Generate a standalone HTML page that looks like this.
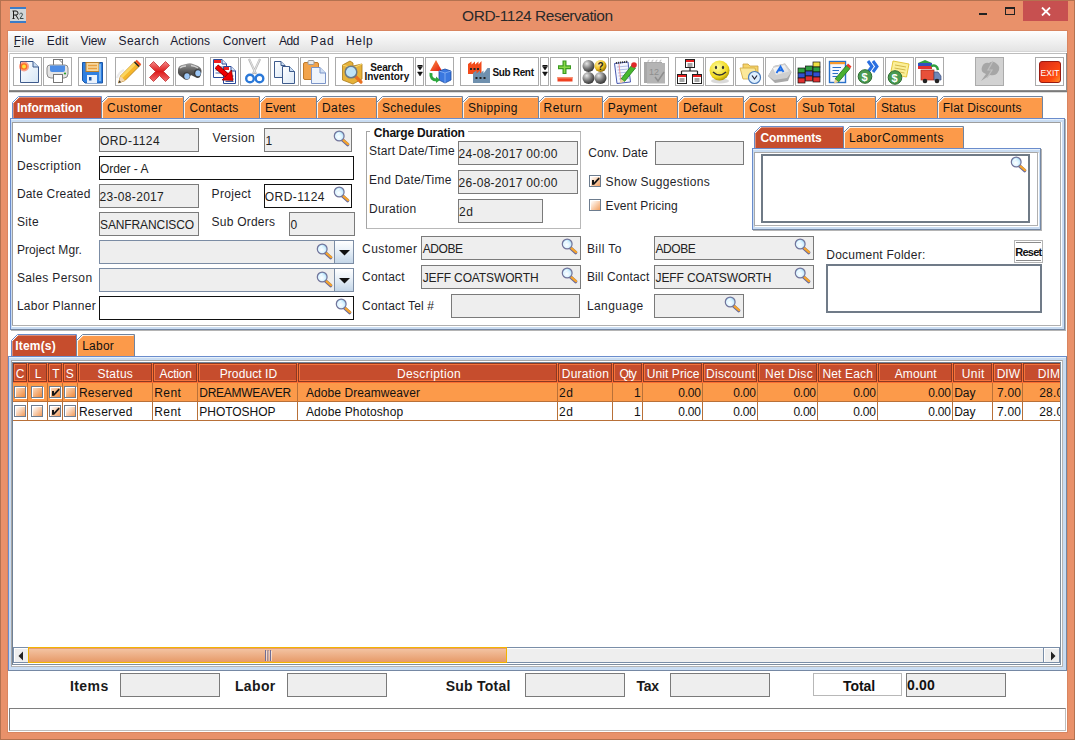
<!DOCTYPE html><html><head><meta charset="utf-8"><title>ORD-1124 Reservation</title><style>
html,body{margin:0;padding:0}
body{width:1075px;height:740px;position:relative;overflow:hidden;background:#E9916A;font-family:"Liberation Sans",sans-serif}
body div, body svg{position:absolute;box-sizing:border-box}
.t{white-space:nowrap;line-height:20px;height:20px}
</style></head><body>
<div style="left:0px;top:0px;width:1075px;height:1px;background:#B47250"></div>
<div style="left:0px;top:0px;width:1px;height:740px;background:#B47250"></div>
<div style="left:1074px;top:0px;width:1px;height:740px;background:#B47250"></div>
<div style="left:0px;top:739px;width:1075px;height:1px;background:#B47250"></div>
<div class="t" style="left:462.10px;top:6px;font-size:15.5px;font-weight:normal;color:#2a2a2a;letter-spacing:-0.474px">ORD-1124 Reservation</div>
<div style="left:10px;top:7px;width:16px;height:16px;background:#d2d6d8"><div style="left:0;top:0;width:16px;height:2px;background:#3a7cc8"></div><div style="left:0;top:14px;width:16px;height:2px;background:#3a7cc8"></div><svg style="left:1px;top:3px" width="14" height="11" viewBox="0 0 14 11"><path d="M2.5 1 V8.5 M1.5 8.5 H3.5 M1.5 1 H5 Q7 1 7 3.2 Q7 5 5 5 H2.5 M4.8 5 L7.5 9.5" stroke="#1a1a1a" stroke-width="1" fill="none"/><path d="M8.5 4.2 Q9.5 2.8 10.8 3.2 Q12 3.8 11 5.5 L9 8.5 H12.5" stroke="#3a4a4a" stroke-width="1" fill="none"/></svg></div>
<div style="left:979px;top:13px;width:8px;height:2px;background:#222"></div>
<div style="left:1005px;top:7px;width:10px;height:8px;border:1px solid #222;border-top-width:2px"></div>
<div style="left:1023px;top:1px;width:45px;height:20px;background:#C75050"></div>
<svg style="left:1041px;top:7px" width="10" height="9" viewBox="0 0 10 9"><path d="M1 0.5 L9 8.5 M9 0.5 L1 8.5" stroke="#fff" stroke-width="1.8"/></svg>
<div style="left:7px;top:30px;width:1061px;height:703px;background:#D98560"></div>
<div style="left:8px;top:31px;width:1059px;height:701px;background:#FFFFFF"></div>
<div style="left:8px;top:31px;width:1059px;height:20px;background:linear-gradient(#ffffff,#f6f6f6 30%,#e4e4e4)"></div>
<div style="left:8px;top:51px;width:1059px;height:1px;background:#d6d6d6"></div>
<div class="t" style="left:13.70px;top:31px;font-size:12px;font-weight:normal;color:#1a1a30;letter-spacing:0.367px">File</div>
<div class="t" style="left:46.70px;top:31px;font-size:12px;font-weight:normal;color:#1a1a30;letter-spacing:0.3px">Edit</div>
<div class="t" style="left:80.60px;top:31px;font-size:12px;font-weight:normal;color:#1a1a30;letter-spacing:-0.133px">View</div>
<div class="t" style="left:118.50px;top:31px;font-size:12px;font-weight:normal;color:#1a1a30;letter-spacing:0.46px">Search</div>
<div class="t" style="left:170.20px;top:31px;font-size:12px;font-weight:normal;color:#1a1a30;letter-spacing:0.067px">Actions</div>
<div class="t" style="left:222.70px;top:31px;font-size:12px;font-weight:normal;color:#1a1a30;letter-spacing:0.15px">Convert</div>
<div class="t" style="left:278.90px;top:31px;font-size:12px;font-weight:normal;color:#1a1a30;letter-spacing:-0.35px">Add</div>
<div class="t" style="left:310.60px;top:31px;font-size:12px;font-weight:normal;color:#1a1a30;letter-spacing:0.85px">Pad</div>
<div class="t" style="left:345.90px;top:31px;font-size:12px;font-weight:normal;color:#1a1a30;letter-spacing:0.7px">Help</div>
<div style="left:14px;top:46px;width:6px;height:1px;background:#222"></div>
<div style="left:9px;top:53px;width:1058px;height:1px;background:#bdbdbd"></div>
<div style="left:9px;top:53px;width:1px;height:37px;background:#d0d0d0"></div>
<div style="left:1066px;top:53px;width:1px;height:38px;background:#8e8e8e"></div>
<div style="left:9px;top:90px;width:1058px;height:1px;background:#8c8c8c"></div>
<div style="left:9px;top:91px;width:1058px;height:1px;background:#7a7a7a"></div>
<div style="left:9px;top:92px;width:1058px;height:1px;background:#dcdcdc"></div>
<div style="left:13px;top:57px;width:29px;height:29px;background:#ffffff;border:1px solid #ababab"></div>
<svg style="left:14px;top:58px" width="27" height="27" viewBox="0 0 27 27"><defs><linearGradient id="pg1" x1="0" y1="0" x2="1" y2="1"><stop offset="0" stop-color="#ffffff"/><stop offset="1" stop-color="#d6e6f6"/></linearGradient></defs><path d="M6.5 3.5 H19 L24.5 9 V24.5 H6.5 Z" fill="url(#pg1)" stroke="#3d5a8c"/><path d="M19 3.5 V9 H24.5" fill="#c8dcf2" stroke="#3d5a8c"/><circle cx="10" cy="8.5" r="5" fill="#ff5a30" opacity="0.55"/><circle cx="10" cy="8.5" r="3.3" fill="#ff7020"/><circle cx="10" cy="8.5" r="2" fill="#ffe040"/></svg>
<div style="left:43px;top:57px;width:29px;height:29px;background:#ffffff;border:1px solid #ababab"></div>
<svg style="left:44px;top:58px" width="27" height="27" viewBox="0 0 27 27"><rect x="9.5" y="1.5" width="9" height="9" fill="#fff" stroke="#777"/><path d="M15 1.5 L18.5 5" stroke="#777"/><path d="M3 10 Q3 7 6 7 H21 Q24 7 24 10 V16 Q24 20 20 20 H7 Q3 20 3 16 Z" fill="#e4e4e4" stroke="#8a8a8a"/><path d="M6 7.5 H21 V12 Q21 14 19 14 H8 Q6 14 6 12 Z" fill="#4d8de6"/><rect x="9.5" y="16.5" width="9" height="8" fill="#fff" stroke="#777"/><circle cx="21" cy="15.5" r="1.1" fill="#2ca02c"/></svg>
<div style="left:78px;top:57px;width:29px;height:29px;background:#ffffff;border:1px solid #ababab"></div>
<svg style="left:79px;top:58px" width="27" height="27" viewBox="0 0 27 27"><path d="M3.5 4.5 H23.5 V25 H6 L3.5 22.5 Z" fill="#2f7fe0" stroke="#1b57a8"/><rect x="7" y="4.5" width="13" height="9" fill="#f9d9a0" stroke="#b8802c"/><path d="M9 7.5 H18 M9 10.5 H18" stroke="#e8a040" stroke-width="1.4"/><rect x="8" y="17" width="10" height="8" fill="#eaf2fc"/><rect x="10" y="19" width="2.5" height="3.5" fill="#1b57a8"/><rect x="20" y="6" width="2" height="17" fill="#7fb8f0"/></svg>
<div style="left:115px;top:57px;width:29px;height:29px;background:#ffffff;border:1px solid #ababab"></div>
<svg style="left:116px;top:58px" width="27" height="27" viewBox="0 0 27 27"><path d="M2.5 25 L4.5 18 L19.5 3 L24 7.5 L9 22.5 Z" fill="#f5b62a" stroke="#b27712" stroke-width="0.8"/><path d="M4.5 18 L19.5 3 L21.5 5 L6.5 20 Z" fill="#fbd560"/><path d="M2.5 25 L4.5 18 L9 22.5 Z" fill="#f1d6b0"/><path d="M2.5 25 L3.3 22.3 L5.2 24.2 Z" fill="#333"/><path d="M18.5 4 L23 8.5" stroke="#222" stroke-width="1.6"/><path d="M20 2.5 L24.5 7" stroke="#f04a20" stroke-width="2.2"/><path d="M1 20 Q3 14 8 12" stroke="#ddd" stroke-width="2" fill="none" opacity="0.6"/></svg>
<div style="left:145px;top:57px;width:29px;height:29px;background:#ffffff;border:1px solid #ababab"></div>
<svg style="left:146px;top:58px" width="27" height="27" viewBox="0 0 27 27"><defs><linearGradient id="xg" x1="0" y1="0" x2="0" y2="1"><stop offset="0" stop-color="#f58a8a"/><stop offset="0.5" stop-color="#dd1a1a"/><stop offset="1" stop-color="#f07070"/></linearGradient></defs><path d="M3.5 7.5 L7.5 3.5 L13.5 9.5 L19.5 3.5 L23.5 7.5 L17.5 13.5 L23.5 19.5 L19.5 23.5 L13.5 17.5 L7.5 23.5 L3.5 19.5 L9.5 13.5 Z" fill="url(#xg)" stroke="#c03030" stroke-width="0.8"/></svg>
<div style="left:175px;top:57px;width:29px;height:29px;background:#ffffff;border:1px solid #ababab"></div>
<svg style="left:176px;top:58px" width="27" height="27" viewBox="0 0 27 27"><defs><linearGradient id="bng" x1="0" y1="0" x2="0" y2="1"><stop offset="0" stop-color="#9a9a9a"/><stop offset="0.5" stop-color="#5a5a5a"/><stop offset="1" stop-color="#3a3a3a"/></linearGradient></defs><path d="M2 12 Q2 8 6 7 L12 5.5 Q15 5 17 6 L22 8 Q26 10 25.5 14 L24 19 Q22 21 19 19 L15 17 L13 20 Q10 22 7 20 L3 17 Q1.5 15 2 12 Z" fill="url(#bng)"/><path d="M4 10 Q6 8 10 8 M15 7.5 Q19 8 22 10" stroke="#d0d0d0" stroke-width="1.3" fill="none"/><ellipse cx="10.5" cy="18" rx="3.6" ry="3.8" fill="#3a3a3a"/><ellipse cx="21.5" cy="15" rx="3.6" ry="3.8" fill="#3a3a3a"/><ellipse cx="11" cy="18.3" rx="2.7" ry="3" fill="#9cc6f4"/><ellipse cx="22" cy="15.3" rx="2.7" ry="3" fill="#9cc6f4"/></svg>
<div style="left:210px;top:57px;width:29px;height:29px;background:#ffffff;border:1px solid #ababab"></div>
<svg style="left:211px;top:58px" width="27" height="27" viewBox="0 0 27 27"><path d="M2.5 1.5 H11 L15.5 6 V19.5 H2.5 Z" fill="#fff" stroke="#2a4a9a"/><rect x="3" y="2" width="7" height="3" fill="#f02020"/><path d="M11 1.5 V6 H15.5" fill="#dde8f6" stroke="#2a4a9a"/><path d="M4.5 9 H13 M4.5 12 H13 M4.5 15 H11" stroke="#2a4a9a" stroke-width="0.8"/><path d="M12.5 8.5 H20 L24.5 13 V25.5 H12.5 Z" fill="#fff" stroke="#2a4a9a"/><rect x="13" y="9" width="5" height="3" fill="#f02020"/><path d="M20 8.5 V13 H24.5" fill="#dde8f6" stroke="#2a4a9a"/><path d="M14.5 18 H22.5 M14.5 21 H22.5 M14.5 23.5 H22.5" stroke="#2a4a9a" stroke-width="0.9"/><path d="M5.5 8.5 L16.5 18" stroke="#7a0000" stroke-width="5.2"/><path d="M5.5 8.5 L16.5 18" stroke="#f00000" stroke-width="3.8"/><path d="M11 22 L22 22.5 L20.5 12 Z" fill="#f00000" stroke="#7a0000" stroke-width="0.7"/></svg>
<div style="left:240px;top:57px;width:29px;height:29px;background:#ffffff;border:1px solid #ababab"></div>
<svg style="left:241px;top:58px" width="27" height="27" viewBox="0 0 27 27"><path d="M8 1 L15 16 M19 1 L12 16" stroke="#b8b8b8" stroke-width="2.2"/><path d="M8.5 1.5 L14.5 15 M18.5 1.5 L12.5 15" stroke="#eee" stroke-width="0.8"/><circle cx="9" cy="20.5" r="3.8" fill="none" stroke="#2a78d8" stroke-width="2.4"/><circle cx="18.5" cy="20.5" r="3.8" fill="none" stroke="#2a78d8" stroke-width="2.4"/></svg>
<div style="left:270px;top:57px;width:29px;height:29px;background:#ffffff;border:1px solid #ababab"></div>
<svg style="left:271px;top:58px" width="27" height="27" viewBox="0 0 27 27"><defs><linearGradient id="cg" x1="0" y1="0" x2="1" y2="1"><stop offset="0" stop-color="#fff"/><stop offset="1" stop-color="#dbe8f6"/></linearGradient></defs><path d="M3.5 3.5 H10 L14 7.5 V19.5 H3.5 Z" fill="url(#cg)" stroke="#3d5a8c"/><path d="M10 3.5 V7.5 H14" fill="#c8dcf2" stroke="#3d5a8c"/><path d="M11.5 8.5 H18.5 L23.5 13.5 V25.5 H11.5 Z" fill="url(#cg)" stroke="#3d5a8c"/><path d="M18.5 8.5 V13.5 H23.5" fill="#c8dcf2" stroke="#3d5a8c"/></svg>
<div style="left:300px;top:57px;width:29px;height:29px;background:#ffffff;border:1px solid #ababab"></div>
<svg style="left:301px;top:58px" width="27" height="27" viewBox="0 0 27 27"><rect x="2.5" y="4.5" width="15" height="17" rx="1.5" fill="#f2a34a" stroke="#c07a28"/><rect x="7" y="2.5" width="6" height="4" rx="1" fill="#e8e8e8" stroke="#999"/><path d="M10.5 9.5 H19 L24.5 15 V25.5 H10.5 Z" fill="#eef4fc" stroke="#7a94c8"/><path d="M19 9.5 V15 H24.5" fill="#d0e0f4" stroke="#7a94c8"/></svg>
<div style="left:425px;top:57px;width:29px;height:29px;background:#ffffff;border:1px solid #ababab"></div>
<svg style="left:426px;top:58px" width="27" height="27" viewBox="0 0 27 27"><defs><linearGradient id="tg" x1="0" y1="0" x2="1" y2="1"><stop offset="0" stop-color="#ff9040"/><stop offset="1" stop-color="#e01810"/></linearGradient></defs><path d="M4 13 L10 2 L16 13 Z" fill="url(#tg)"/><path d="M13 13 L19 11 L25 13 V22 L19 25 L13 22 Z" fill="#3a78e0" stroke="#1a4aa0" stroke-width="0.8"/><path d="M13 13 L19 15 L25 13 M19 15 V25" stroke="#8ab4f4" stroke-width="0.8" fill="none"/><path d="M5 15 Q4 22 11 22" stroke="#2ca83c" stroke-width="3" fill="none"/><path d="M10 18.5 L14 22 L10 25 Z" fill="#2ca83c"/></svg>
<div style="left:550px;top:57px;width:29px;height:29px;background:#ffffff;border:1px solid #ababab"></div>
<svg style="left:551px;top:58px" width="27" height="27" viewBox="0 0 27 27"><path d="M13.5 2.5 V16 M7 9.2 H20" stroke="#3a9a20" stroke-width="4"/><path d="M13.5 3.5 V15 M8 9.2 H19" stroke="#8ad848" stroke-width="1.6"/><rect x="6.5" y="19" width="15" height="4.5" fill="#f04020"/><rect x="6.5" y="19" width="15" height="1.5" fill="#f89070"/></svg>
<div style="left:580px;top:57px;width:29px;height:29px;background:#ffffff;border:1px solid #ababab"></div>
<svg style="left:581px;top:58px" width="27" height="27" viewBox="0 0 27 27"><defs><radialGradient id="bg1" cx="0.35" cy="0.3" r="0.75"><stop offset="0" stop-color="#e8e8e8"/><stop offset="0.6" stop-color="#707070"/><stop offset="1" stop-color="#303030"/></radialGradient><radialGradient id="bg2" cx="0.35" cy="0.3" r="0.75"><stop offset="0" stop-color="#fff4b0"/><stop offset="0.6" stop-color="#f0c020"/><stop offset="1" stop-color="#806000"/></radialGradient></defs><circle cx="7.5" cy="8" r="6" fill="url(#bg1)"/><circle cx="19.5" cy="8" r="6" fill="url(#bg2)"/><circle cx="7.5" cy="20" r="6" fill="url(#bg1)"/><circle cx="19.5" cy="20" r="6" fill="url(#bg1)"/><text x="16.5" y="12" font-size="10" font-weight="bold" font-family="Liberation Sans" fill="#222">?</text></svg>
<div style="left:610px;top:57px;width:29px;height:29px;background:#ffffff;border:1px solid #ababab"></div>
<svg style="left:611px;top:58px" width="27" height="27" viewBox="0 0 27 27"><path d="M3.5 5.5 L17 4 L19.5 24 L6 25.5 Z" fill="#f4f6ff" stroke="#4a5ab0"/><path d="M5 5 L17 3.5" stroke="#333" stroke-width="2" stroke-dasharray="1 1"/><path d="M6 9 L17 8 M6.5 12 L17.5 11 M7 15 L18 14 M7.5 18 L18.5 17 M8 21 L19 20" stroke="#a0b0e0" stroke-width="0.8"/><path d="M8 6 L10 25" stroke="#f08080" stroke-width="0.8"/><path d="M10 21 L21 7 L24.5 10 L13.5 23.5 Z" fill="#48b830" stroke="#1e7a18" stroke-width="0.8"/><path d="M10 21 L9 25 L13.5 23.5 Z" fill="#f0d8a0"/><circle cx="23" cy="7" r="2.8" fill="#e02a2a"/></svg>
<div style="left:640px;top:57px;width:29px;height:29px;background:#ffffff;border:1px solid #ababab"></div>
<svg style="left:641px;top:58px" width="27" height="27" viewBox="0 0 27 27"><path d="M3 4 H21 V25 H3 Z" fill="#a8a8a8"/><path d="M6 5 H24 V25.5 H6 Z" fill="#b4b4b4"/><path d="M7 4 Q7 2 8.5 2 M11 4 Q11 2 12.5 2 M15 4 Q15 2 16.5 2 M19 4 Q19 2 20.5 2" stroke="#c8c8c8" stroke-width="1.2" fill="none"/><text x="8" y="17" font-size="9" font-family="Liberation Sans" fill="#8e8e8e">12</text><path d="M14 19 L17 23 L23 14" stroke="#8e8e8e" stroke-width="1.5" fill="none"/></svg>
<div style="left:675px;top:57px;width:29px;height:29px;background:#ffffff;border:1px solid #ababab"></div>
<svg style="left:676px;top:58px" width="27" height="27" viewBox="0 0 27 27"><path d="M14 9 V13 M5.5 13 H21.5 M5.5 13 V16 M21.5 13 V16" stroke="#222" stroke-width="1.2"/><rect x="9.5" y="1.5" width="9" height="8" fill="#fff" stroke="#222"/><rect x="10" y="2" width="8" height="2" fill="#e82020"/><path d="M11.5 6 H16.5 M11.5 8 H16.5" stroke="#222" stroke-width="0.8"/><rect x="1.5" y="16.5" width="9" height="9" fill="#fff" stroke="#222"/><rect x="2" y="17" width="8" height="2" fill="#e82020"/><path d="M3.5 21 H8.5 M3.5 23 H8.5" stroke="#222" stroke-width="0.8"/><rect x="16.5" y="16.5" width="9" height="9" fill="#fff" stroke="#222"/><rect x="17" y="17" width="8" height="2" fill="#e82020"/><path d="M18.5 21 H23.5 M18.5 23 H23.5" stroke="#222" stroke-width="0.8"/></svg>
<div style="left:705px;top:57px;width:29px;height:29px;background:#ffffff;border:1px solid #ababab"></div>
<svg style="left:706px;top:58px" width="27" height="27" viewBox="0 0 27 27"><defs><radialGradient id="sg" cx="0.4" cy="0.35" r="0.7"><stop offset="0" stop-color="#ffffa0"/><stop offset="0.7" stop-color="#f0d820"/><stop offset="1" stop-color="#a08800"/></radialGradient></defs><ellipse cx="14" cy="23" rx="9" ry="2.5" fill="#000" opacity="0.15"/><circle cx="13.5" cy="12.5" r="10" fill="url(#sg)"/><ellipse cx="10" cy="9.5" rx="1.1" ry="1.8" fill="#333"/><ellipse cx="17" cy="9.5" rx="1.1" ry="1.8" fill="#333"/><path d="M7 14 Q13.5 20 20 14" stroke="#333" stroke-width="1.5" fill="none"/></svg>
<div style="left:735px;top:57px;width:29px;height:29px;background:#ffffff;border:1px solid #ababab"></div>
<svg style="left:736px;top:58px" width="27" height="27" viewBox="0 0 27 27"><path d="M7 6 H12 L14 8 H22 V20 H7 Z" fill="#f6d46a" stroke="#c8a040" stroke-width="0.8"/><path d="M4 10 H19 L22 21 H7 Z" fill="#fbe89a" stroke="#d0a840" stroke-width="0.8"/><circle cx="18.5" cy="19.5" r="6" fill="#dff0ff" stroke="#4a7ab8" stroke-width="1.2"/><path d="M16 17.5 L18.5 21 L21 17.5" stroke="#223" stroke-width="1.2" fill="none"/></svg>
<div style="left:765px;top:57px;width:29px;height:29px;background:#ffffff;border:1px solid #ababab"></div>
<svg style="left:766px;top:58px" width="27" height="27" viewBox="0 0 27 27"><defs><linearGradient id="kg" x1="0" y1="0" x2="1" y2="1"><stop offset="0" stop-color="#ffffff"/><stop offset="1" stop-color="#d8d8d8"/></linearGradient></defs><path d="M2 18 L8 8 L19 5.5 L25.5 14 L22 23 L9 25 Z" fill="#a8a8a8"/><path d="M2 18 L8 8 L19 5.5 L25.5 14 L21 20 L8 22 Z" fill="#cfcfcf"/><path d="M7 10 L18.5 7 L23 13.5 L10 17 Z" fill="url(#kg)"/><path d="M10.5 15 L14.5 8.5 L17.5 14 M12 12.5 L16 12" stroke="#1f6ee8" stroke-width="1.8" fill="none"/></svg>
<div style="left:795px;top:57px;width:29px;height:29px;background:#ffffff;border:1px solid #ababab"></div>
<svg style="left:796px;top:58px" width="27" height="27" viewBox="0 0 27 27"><rect x="2" y="10" width="7" height="5" fill="#30a040" stroke="#111" stroke-width="0.7"/><rect x="2" y="15" width="7" height="5" fill="#3050d0" stroke="#111" stroke-width="0.7"/><rect x="2" y="20" width="7" height="5" fill="#e03030" stroke="#111" stroke-width="0.7"/><rect x="9.5" y="8" width="7" height="5" fill="#30a040" stroke="#111" stroke-width="0.7"/><rect x="9.5" y="13" width="7" height="5" fill="#3050d0" stroke="#111" stroke-width="0.7"/><rect x="9.5" y="18" width="7" height="5" fill="#e03030" stroke="#111" stroke-width="0.7"/><rect x="17" y="4" width="7" height="5" fill="#f0e040" stroke="#111" stroke-width="0.7"/><rect x="17" y="9" width="7" height="5" fill="#30a040" stroke="#111" stroke-width="0.7"/><rect x="17" y="14" width="7" height="5" fill="#3050d0" stroke="#111" stroke-width="0.7"/><rect x="17" y="19" width="7" height="5" fill="#e03030" stroke="#111" stroke-width="0.7"/></svg>
<div style="left:825px;top:57px;width:29px;height:29px;background:#ffffff;border:1px solid #ababab"></div>
<svg style="left:826px;top:58px" width="27" height="27" viewBox="0 0 27 27"><rect x="3.5" y="3.5" width="16" height="21" fill="#f4f8ff" stroke="#2a70c8" stroke-width="1.4"/><rect x="4" y="4" width="15" height="2.2" fill="#f59a30"/><path d="M6.5 9.5 H15 M6.5 12.5 H13 M6.5 15.5 H12 M6.5 18.5 H11" stroke="#2a70c8" stroke-width="1"/><path d="M9 21 L20.5 7.5 L24 10.5 L12.5 24 Z" fill="#48b030" stroke="#1e6a18" stroke-width="0.8"/><path d="M9 21 L8 25.5 L12.5 24 Z" fill="#f0d090"/><path d="M20.5 7.5 L22 5.5 L25.5 8.5 L24 10.5 Z" fill="#e83a2a"/></svg>
<div style="left:855px;top:57px;width:29px;height:29px;background:#ffffff;border:1px solid #ababab"></div>
<svg style="left:856px;top:58px" width="27" height="27" viewBox="0 0 27 27"><path d="M12 3 L16 8.5 L12 14 M17 3 L21 8.5 L17 14" stroke="#2a6fe0" stroke-width="3" fill="none"/><circle cx="9" cy="18.5" r="6.8" fill="#4a9a50" stroke="#2c6a30"/><text x="5.5" y="23" font-size="11" font-weight="bold" font-family="Liberation Sans" fill="#fff">$</text></svg>
<div style="left:885px;top:57px;width:29px;height:29px;background:#ffffff;border:1px solid #ababab"></div>
<svg style="left:886px;top:58px" width="27" height="27" viewBox="0 0 27 27"><path d="M7 3 L23 6 L20.5 19 L4.5 16 Z" fill="#fbef98" stroke="#e0c030" stroke-width="0.9"/><path d="M9 7 L20 9 M8.5 10 L19.5 12 M8 13 L18.5 15" stroke="#c8a838" stroke-width="0.8"/><circle cx="9" cy="19.5" r="6.8" fill="#4a9a50" stroke="#2c6a30"/><text x="5.5" y="24" font-size="11" font-weight="bold" font-family="Liberation Sans" fill="#fff">$</text></svg>
<div style="left:915px;top:57px;width:29px;height:29px;background:#ffffff;border:1px solid #ababab"></div>
<svg style="left:916px;top:58px" width="27" height="27" viewBox="0 0 27 27"><path d="M2 5 L9 2 L16 5 L9 8 Z" fill="#30a040"/><rect x="2" y="5" width="14" height="3" fill="#3050c0"/><rect x="2" y="8" width="14" height="3" fill="#e03030"/><path d="M15 8 Q21 6 22 12" stroke="#30a040" stroke-width="2.5" fill="none"/><rect x="5" y="12" width="13" height="10" fill="#e8503a" stroke="#a02a1a" stroke-width="0.7"/><path d="M18 14 H22 L25 18 V22 H18 Z" fill="#7088b8" stroke="#3a4a78" stroke-width="0.7"/><circle cx="9" cy="23" r="2.3" fill="#222"/><circle cx="21" cy="23" r="2.3" fill="#222"/></svg>
<div style="left:1035px;top:57px;width:29px;height:29px;background:#ffffff;border:1px solid #ababab"></div>
<svg style="left:1036px;top:58px" width="27" height="27" viewBox="0 0 27 27"><defs><linearGradient id="eg" x1="0" y1="0" x2="1" y2="1"><stop offset="0" stop-color="#d82a1a"/><stop offset="0.7" stop-color="#ff4a10"/><stop offset="1" stop-color="#ff9a30"/></linearGradient></defs><rect x="3.5" y="3.5" width="21" height="21" rx="2.5" fill="url(#eg)" stroke="#9a1a10"/><text x="4.5" y="17.5" font-size="8.5" font-family="Liberation Sans" fill="#fff" textLength="19" lengthAdjust="spacingAndGlyphs">EXIT</text></svg>
<div style="left:975px;top:57px;width:29px;height:29px;background:#d2d2d2;border:1px solid #ababab"></div>
<svg style="left:976px;top:58px" width="27" height="27" viewBox="0 0 27 27"><path d="M6 9 Q8 4 13 5 Q17 2 21 6 Q25 9 22 14 Q20 18 14 17 L5 23 L10 16 Q4 14 6 9 Z" fill="#a6a6a6"/><path d="M17 3 L12 12 H16 L11 20" stroke="#c0c0c0" stroke-width="1.2" fill="none"/></svg>
<div style="left:335px;top:57px;width:79px;height:29px;background:#ffffff;border:1px solid #ababab"></div>
<svg style="left:341px;top:59px" width="24" height="26" viewBox="0 0 24 26"><path d="M1.5 6 L9 2 L12 4 V7 L21 5 V20 L12 25 L1.5 21 Z" fill="#e6b23a" stroke="#a87a18" stroke-width="0.8"/><path d="M1.5 6 L12 9 L21 5" stroke="#f8d870" fill="none"/><path d="M14 17 L20 23" stroke="#e87020" stroke-width="3.2" stroke-linecap="round"/><circle cx="10" cy="13" r="5.8" fill="#bfe4f8" stroke="#6a7a88" stroke-width="1.5"/></svg>
<div class="t" style="left:370.20px;top:58px;font-size:10px;font-weight:bold;color:#111;letter-spacing:-0.12px">Search</div>
<div class="t" style="left:364.40px;top:67px;font-size:10px;font-weight:bold;color:#111;letter-spacing:-0.012px">Inventory</div>
<div style="left:415px;top:57px;width:9px;height:29px;background:#fff;border:1px solid #ababab"></div>
<svg style="left:416px;top:64px" width="8" height="14" viewBox="0 0 8 14"><path d="M1.5 1.5 H6.5" stroke="#111" stroke-width="1"/><path d="M1.5 2.5 H6.5 L4 6 Z M1.5 8 H6.5 L4 12 Z" fill="#111" stroke="#111" stroke-width="0.5" stroke-linejoin="round"/></svg>
<div style="left:540px;top:57px;width:9px;height:29px;background:#fff;border:1px solid #ababab"></div>
<svg style="left:541px;top:64px" width="8" height="14" viewBox="0 0 8 14"><path d="M1.5 1.5 H6.5" stroke="#111" stroke-width="1"/><path d="M1.5 2.5 H6.5 L4 6 Z M1.5 8 H6.5 L4 12 Z" fill="#111" stroke="#111" stroke-width="0.5" stroke-linejoin="round"/></svg>
<div style="left:460px;top:57px;width:79px;height:29px;background:#ffffff;border:1px solid #ababab"></div>
<svg style="left:467px;top:60px" width="25" height="24" viewBox="0 0 25 24"><path d="M1 4 L4.5 1.5 V4.5 L8 1.5 V4.5 L11.5 1.5 V4.5 L14.5 1 V14 H1 Z" fill="#f24a1a"/><rect x="3" y="8" width="2" height="2" fill="#222"/><rect x="6.5" y="8" width="2" height="2" fill="#222"/><rect x="10" y="8" width="2" height="2" fill="#222"/><path d="M6 13 L9.5 10.5 V13.5 L13 10.5 V13.5 L16.5 10.5 V13.5 L20.5 8 H23 V23 H6 Z" fill="#6f90ae"/><rect x="8.5" y="17" width="2" height="2" fill="#222"/><rect x="12.5" y="17" width="2" height="2" fill="#222"/><rect x="16.5" y="17" width="2" height="2" fill="#222"/></svg>
<div class="t" style="left:492.40px;top:63px;font-size:10px;font-weight:bold;color:#111;letter-spacing:-0.329px">Sub Rent</div>
<div style="left:10px;top:118px;width:1055px;height:212px;background:#C9DCF2;border:1px solid #7588a4;border-left-color:#6a8ccc;border-top-color:#6a8ccc"></div>
<div style="left:1065px;top:119px;width:1px;height:212px;background:#b4b4b4"></div>
<div style="left:11px;top:330px;width:1055px;height:1px;background:#b4b4b4"></div>
<div style="left:11px;top:119px;width:1053px;height:1px;background:#e6f0fb"></div>
<div style="left:12px;top:122px;width:1050px;height:205px;background:#fff;border:1px solid #9e9e9e;border-right-color:#b0b0b0;border-bottom-color:#b0b0b0"></div>
<div style="left:12px;top:326px;width:1050px;height:1px;background:#ffffff"></div>
<div style="left:1061px;top:122px;width:1px;height:205px;background:#ffffff"></div>
<div style="left:12px;top:325px;width:1049px;height:1px;background:#b0b0b0"></div>
<div style="left:1060px;top:122px;width:1px;height:204px;background:#b0b0b0"></div>
<svg style="left:12px;top:96px" width="90" height="22" viewBox="0 0 90 22" shape-rendering="crispEdges"><polygon points="1,22 1,7 7,1 89,1 89,22" fill="#C64D2D"/><path d="M0.5 22 V6.5 L6.5 0.5 H89.5 V22" fill="none" stroke="#6b8cc8" stroke-width="1" shape-rendering="auto"/><path d="M1.5 22 V7 L7 1.5 H88.5" fill="none" stroke="#ffffff" stroke-opacity="0.35" stroke-width="1" shape-rendering="auto"/></svg>
<svg style="left:101px;top:96px" width="83" height="22" viewBox="0 0 83 22" shape-rendering="crispEdges"><polygon points="1,22 1,7 7,1 82,1 82,22" fill="#FC9A4A"/><path d="M0.5 22 V6.5 L6.5 0.5 H82.5 V22" fill="none" stroke="#6f84a0" stroke-width="1" shape-rendering="auto"/><path d="M1.5 22 V7 L7 1.5 H81.5" fill="none" stroke="#ffffff" stroke-opacity="0.85" stroke-width="1" shape-rendering="auto"/></svg>
<svg style="left:183px;top:96px" width="77" height="22" viewBox="0 0 77 22" shape-rendering="crispEdges"><polygon points="1,22 1,7 7,1 76,1 76,22" fill="#FC9A4A"/><path d="M0.5 22 V6.5 L6.5 0.5 H76.5 V22" fill="none" stroke="#6f84a0" stroke-width="1" shape-rendering="auto"/><path d="M1.5 22 V7 L7 1.5 H75.5" fill="none" stroke="#ffffff" stroke-opacity="0.85" stroke-width="1" shape-rendering="auto"/></svg>
<svg style="left:259px;top:96px" width="58" height="22" viewBox="0 0 58 22" shape-rendering="crispEdges"><polygon points="1,22 1,7 7,1 57,1 57,22" fill="#FC9A4A"/><path d="M0.5 22 V6.5 L6.5 0.5 H57.5 V22" fill="none" stroke="#6f84a0" stroke-width="1" shape-rendering="auto"/><path d="M1.5 22 V7 L7 1.5 H56.5" fill="none" stroke="#ffffff" stroke-opacity="0.85" stroke-width="1" shape-rendering="auto"/></svg>
<svg style="left:316px;top:96px" width="61" height="22" viewBox="0 0 61 22" shape-rendering="crispEdges"><polygon points="1,22 1,7 7,1 60,1 60,22" fill="#FC9A4A"/><path d="M0.5 22 V6.5 L6.5 0.5 H60.5 V22" fill="none" stroke="#6f84a0" stroke-width="1" shape-rendering="auto"/><path d="M1.5 22 V7 L7 1.5 H59.5" fill="none" stroke="#ffffff" stroke-opacity="0.85" stroke-width="1" shape-rendering="auto"/></svg>
<svg style="left:376px;top:96px" width="87" height="22" viewBox="0 0 87 22" shape-rendering="crispEdges"><polygon points="1,22 1,7 7,1 86,1 86,22" fill="#FC9A4A"/><path d="M0.5 22 V6.5 L6.5 0.5 H86.5 V22" fill="none" stroke="#6f84a0" stroke-width="1" shape-rendering="auto"/><path d="M1.5 22 V7 L7 1.5 H85.5" fill="none" stroke="#ffffff" stroke-opacity="0.85" stroke-width="1" shape-rendering="auto"/></svg>
<svg style="left:462px;top:96px" width="77" height="22" viewBox="0 0 77 22" shape-rendering="crispEdges"><polygon points="1,22 1,7 7,1 76,1 76,22" fill="#FC9A4A"/><path d="M0.5 22 V6.5 L6.5 0.5 H76.5 V22" fill="none" stroke="#6f84a0" stroke-width="1" shape-rendering="auto"/><path d="M1.5 22 V7 L7 1.5 H75.5" fill="none" stroke="#ffffff" stroke-opacity="0.85" stroke-width="1" shape-rendering="auto"/></svg>
<svg style="left:538px;top:96px" width="65" height="22" viewBox="0 0 65 22" shape-rendering="crispEdges"><polygon points="1,22 1,7 7,1 64,1 64,22" fill="#FC9A4A"/><path d="M0.5 22 V6.5 L6.5 0.5 H64.5 V22" fill="none" stroke="#6f84a0" stroke-width="1" shape-rendering="auto"/><path d="M1.5 22 V7 L7 1.5 H63.5" fill="none" stroke="#ffffff" stroke-opacity="0.85" stroke-width="1" shape-rendering="auto"/></svg>
<svg style="left:602px;top:96px" width="76" height="22" viewBox="0 0 76 22" shape-rendering="crispEdges"><polygon points="1,22 1,7 7,1 75,1 75,22" fill="#FC9A4A"/><path d="M0.5 22 V6.5 L6.5 0.5 H75.5 V22" fill="none" stroke="#6f84a0" stroke-width="1" shape-rendering="auto"/><path d="M1.5 22 V7 L7 1.5 H74.5" fill="none" stroke="#ffffff" stroke-opacity="0.85" stroke-width="1" shape-rendering="auto"/></svg>
<svg style="left:677px;top:96px" width="67" height="22" viewBox="0 0 67 22" shape-rendering="crispEdges"><polygon points="1,22 1,7 7,1 66,1 66,22" fill="#FC9A4A"/><path d="M0.5 22 V6.5 L6.5 0.5 H66.5 V22" fill="none" stroke="#6f84a0" stroke-width="1" shape-rendering="auto"/><path d="M1.5 22 V7 L7 1.5 H65.5" fill="none" stroke="#ffffff" stroke-opacity="0.85" stroke-width="1" shape-rendering="auto"/></svg>
<svg style="left:743px;top:96px" width="54" height="22" viewBox="0 0 54 22" shape-rendering="crispEdges"><polygon points="1,22 1,7 7,1 53,1 53,22" fill="#FC9A4A"/><path d="M0.5 22 V6.5 L6.5 0.5 H53.5 V22" fill="none" stroke="#6f84a0" stroke-width="1" shape-rendering="auto"/><path d="M1.5 22 V7 L7 1.5 H52.5" fill="none" stroke="#ffffff" stroke-opacity="0.85" stroke-width="1" shape-rendering="auto"/></svg>
<svg style="left:796px;top:96px" width="80" height="22" viewBox="0 0 80 22" shape-rendering="crispEdges"><polygon points="1,22 1,7 7,1 79,1 79,22" fill="#FC9A4A"/><path d="M0.5 22 V6.5 L6.5 0.5 H79.5 V22" fill="none" stroke="#6f84a0" stroke-width="1" shape-rendering="auto"/><path d="M1.5 22 V7 L7 1.5 H78.5" fill="none" stroke="#ffffff" stroke-opacity="0.85" stroke-width="1" shape-rendering="auto"/></svg>
<svg style="left:875px;top:96px" width="63" height="22" viewBox="0 0 63 22" shape-rendering="crispEdges"><polygon points="1,22 1,7 7,1 62,1 62,22" fill="#FC9A4A"/><path d="M0.5 22 V6.5 L6.5 0.5 H62.5 V22" fill="none" stroke="#6f84a0" stroke-width="1" shape-rendering="auto"/><path d="M1.5 22 V7 L7 1.5 H61.5" fill="none" stroke="#ffffff" stroke-opacity="0.85" stroke-width="1" shape-rendering="auto"/></svg>
<svg style="left:937px;top:96px" width="106" height="22" viewBox="0 0 106 22" shape-rendering="crispEdges"><polygon points="1,22 1,7 7,1 105,1 105,22" fill="#FC9A4A"/><path d="M0.5 22 V6.5 L6.5 0.5 H105.5 V22" fill="none" stroke="#6f84a0" stroke-width="1" shape-rendering="auto"/><path d="M1.5 22 V7 L7 1.5 H104.5" fill="none" stroke="#ffffff" stroke-opacity="0.85" stroke-width="1" shape-rendering="auto"/></svg>
<div class="t" style="left:16.90px;top:98px;font-size:12px;font-weight:bold;color:#ffffff;letter-spacing:-0.03px">Information</div>
<div class="t" style="left:107.10px;top:98px;font-size:12px;font-weight:normal;color:#111;letter-spacing:0.429px">Customer</div>
<div class="t" style="left:189.50px;top:98px;font-size:12px;font-weight:normal;color:#111;letter-spacing:0.2px">Contacts</div>
<div class="t" style="left:265.10px;top:98px;font-size:12px;font-weight:normal;color:#111;letter-spacing:-0.1px">Event</div>
<div class="t" style="left:322.10px;top:98px;font-size:12px;font-weight:normal;color:#111;letter-spacing:0.35px">Dates</div>
<div class="t" style="left:381.90px;top:98px;font-size:12px;font-weight:normal;color:#111;letter-spacing:0.363px">Schedules</div>
<div class="t" style="left:467.90px;top:98px;font-size:12px;font-weight:normal;color:#111;letter-spacing:0.414px">Shipping</div>
<div class="t" style="left:543.60px;top:98px;font-size:12px;font-weight:normal;color:#111;letter-spacing:0.46px">Return</div>
<div class="t" style="left:607.80px;top:98px;font-size:12px;font-weight:normal;color:#111;letter-spacing:0.283px">Payment</div>
<div class="t" style="left:682.90px;top:98px;font-size:12px;font-weight:normal;color:#111;letter-spacing:0.233px">Default</div>
<div class="t" style="left:748.90px;top:98px;font-size:12px;font-weight:normal;color:#111;letter-spacing:0.567px">Cost</div>
<div class="t" style="left:802.00px;top:98px;font-size:12px;font-weight:normal;color:#111;letter-spacing:0.362px">Sub Total</div>
<div class="t" style="left:881.00px;top:98px;font-size:12px;font-weight:normal;color:#111;letter-spacing:0.1px">Status</div>
<div class="t" style="left:942.80px;top:98px;font-size:12px;font-weight:normal;color:#111;letter-spacing:0.208px">Flat Discounts</div>
<div class="t" style="left:16.90px;top:128px;font-size:12px;font-weight:normal;color:#1f1f2a;letter-spacing:0.42px">Number</div>
<div style="left:99px;top:128px;width:100px;height:24px;background:#EEEEEE;border:1px solid #7A7A7A"></div>
<div class="t" style="left:99.90px;top:131px;font-size:12px;font-weight:normal;color:#222;letter-spacing:0.471px">ORD-1124</div>
<div class="t" style="left:212.60px;top:128px;font-size:12px;font-weight:normal;color:#1f1f2a;letter-spacing:0.333px">Version</div>
<div style="left:264px;top:128px;width:88px;height:24px;background:#EEEEEE;border:1px solid #7A7A7A"></div>
<div class="t" style="left:265.50px;top:131px;font-size:12px;font-weight:normal;color:#222;letter-spacing:-0.3px">1</div>
<div style="left:333px;top:130px;width:17px;height:17px"><svg width="17" height="17" viewBox="0 0 17 17"><defs><radialGradient id="mg" cx="0.45" cy="0.6" r="0.65"><stop offset="0" stop-color="#ffffff"/><stop offset="0.55" stop-color="#d8f2ff"/><stop offset="1" stop-color="#8ccff0"/></radialGradient></defs><path d="M9.6 10 L14.6 14.6" stroke="#6a6a98" stroke-width="3.4" stroke-linecap="round"/><path d="M10 9.8 L15 14.2" stroke="#f6a42c" stroke-width="2.2" stroke-linecap="round"/><circle cx="6.2" cy="6" r="4.9" fill="url(#mg)" stroke="#72749a" stroke-width="1.2"/><path d="M3.5 5 Q4.5 3 6.5 2.8" stroke="#ffffff" stroke-width="1" fill="none"/></svg></div>
<div class="t" style="left:16.90px;top:156px;font-size:12px;font-weight:normal;color:#1f1f2a;letter-spacing:0.41px">Description</div>
<div style="left:99px;top:156px;width:255px;height:24px;background:#ffffff;border:1px solid #111111"></div>
<div class="t" style="left:99.90px;top:159px;font-size:12px;font-weight:normal;color:#222;letter-spacing:-0.012px">Order - A</div>
<div class="t" style="left:16.90px;top:184px;font-size:12px;font-weight:normal;color:#1f1f2a;letter-spacing:0.191px">Date Created</div>
<div style="left:99px;top:184px;width:100px;height:24px;background:#EEEEEE;border:1px solid #7A7A7A"></div>
<div class="t" style="left:99.60px;top:187px;font-size:12px;font-weight:normal;color:#222;letter-spacing:0.311px">23-08-2017</div>
<div class="t" style="left:211.60px;top:184px;font-size:12px;font-weight:normal;color:#1f1f2a;letter-spacing:0.317px">Project</div>
<div style="left:264px;top:184px;width:88px;height:24px;background:#ffffff;border:1px solid #111111"></div>
<div class="t" style="left:264.70px;top:187px;font-size:12px;font-weight:normal;color:#222;letter-spacing:0.471px">ORD-1124</div>
<div style="left:333px;top:186px;width:17px;height:17px"><svg width="17" height="17" viewBox="0 0 17 17"><defs><radialGradient id="mg" cx="0.45" cy="0.6" r="0.65"><stop offset="0" stop-color="#ffffff"/><stop offset="0.55" stop-color="#d8f2ff"/><stop offset="1" stop-color="#8ccff0"/></radialGradient></defs><path d="M9.6 10 L14.6 14.6" stroke="#6a6a98" stroke-width="3.4" stroke-linecap="round"/><path d="M10 9.8 L15 14.2" stroke="#f6a42c" stroke-width="2.2" stroke-linecap="round"/><circle cx="6.2" cy="6" r="4.9" fill="url(#mg)" stroke="#72749a" stroke-width="1.2"/><path d="M3.5 5 Q4.5 3 6.5 2.8" stroke="#ffffff" stroke-width="1" fill="none"/></svg></div>
<div class="t" style="left:16.90px;top:212px;font-size:12px;font-weight:normal;color:#1f1f2a;letter-spacing:0.333px">Site</div>
<div style="left:99px;top:212px;width:100px;height:24px;background:#EEEEEE;border:1px solid #7A7A7A"></div>
<div class="t" style="left:100.00px;top:215px;font-size:12px;font-weight:normal;color:#222;letter-spacing:-0.109px">SANFRANCISCO</div>
<div class="t" style="left:211.60px;top:212px;font-size:12px;font-weight:normal;color:#1f1f2a;letter-spacing:0.222px">Sub Orders</div>
<div style="left:289px;top:212px;width:66px;height:24px;background:#EEEEEE;border:1px solid #7A7A7A"></div>
<div class="t" style="left:290.60px;top:215px;font-size:12px;font-weight:normal;color:#222;letter-spacing:0.4px">0</div>
<div class="t" style="left:16.90px;top:240px;font-size:12px;font-weight:normal;color:#1f1f2a;letter-spacing:0.091px">Project Mgr.</div>
<div style="left:99px;top:240px;width:255px;height:24px;background:#EEEEEE;border:1px solid #7b8ca4"></div>
<div style="left:334px;top:240px;width:20px;height:24px;background:linear-gradient(#ffffff,#eaf1f8 40%,#c4d6e8);border:1px solid #7b8ca4"></div>
<svg style="left:339px;top:250px" width="11" height="6" viewBox="0 0 11 6"><path d="M0 0 H11 L5.5 5.5 Z" fill="#111"/></svg>
<div style="left:316px;top:243px;width:17px;height:17px"><svg width="17" height="17" viewBox="0 0 17 17"><defs><radialGradient id="mg" cx="0.45" cy="0.6" r="0.65"><stop offset="0" stop-color="#ffffff"/><stop offset="0.55" stop-color="#d8f2ff"/><stop offset="1" stop-color="#8ccff0"/></radialGradient></defs><path d="M9.6 10 L14.6 14.6" stroke="#6a6a98" stroke-width="3.4" stroke-linecap="round"/><path d="M10 9.8 L15 14.2" stroke="#f6a42c" stroke-width="2.2" stroke-linecap="round"/><circle cx="6.2" cy="6" r="4.9" fill="url(#mg)" stroke="#72749a" stroke-width="1.2"/><path d="M3.5 5 Q4.5 3 6.5 2.8" stroke="#ffffff" stroke-width="1" fill="none"/></svg></div>
<div class="t" style="left:16.90px;top:268px;font-size:12px;font-weight:normal;color:#1f1f2a;letter-spacing:0.345px">Sales Person</div>
<div style="left:99px;top:268px;width:255px;height:24px;background:#EEEEEE;border:1px solid #7b8ca4"></div>
<div style="left:334px;top:268px;width:20px;height:24px;background:linear-gradient(#ffffff,#eaf1f8 40%,#c4d6e8);border:1px solid #7b8ca4"></div>
<svg style="left:339px;top:278px" width="11" height="6" viewBox="0 0 11 6"><path d="M0 0 H11 L5.5 5.5 Z" fill="#111"/></svg>
<div style="left:316px;top:271px;width:17px;height:17px"><svg width="17" height="17" viewBox="0 0 17 17"><defs><radialGradient id="mg" cx="0.45" cy="0.6" r="0.65"><stop offset="0" stop-color="#ffffff"/><stop offset="0.55" stop-color="#d8f2ff"/><stop offset="1" stop-color="#8ccff0"/></radialGradient></defs><path d="M9.6 10 L14.6 14.6" stroke="#6a6a98" stroke-width="3.4" stroke-linecap="round"/><path d="M10 9.8 L15 14.2" stroke="#f6a42c" stroke-width="2.2" stroke-linecap="round"/><circle cx="6.2" cy="6" r="4.9" fill="url(#mg)" stroke="#72749a" stroke-width="1.2"/><path d="M3.5 5 Q4.5 3 6.5 2.8" stroke="#ffffff" stroke-width="1" fill="none"/></svg></div>
<div class="t" style="left:16.90px;top:296px;font-size:12px;font-weight:normal;color:#1f1f2a;letter-spacing:0.283px">Labor Planner</div>
<div style="left:99px;top:296px;width:255px;height:24px;background:#ffffff;border:1px solid #111111"></div>
<div style="left:335px;top:298px;width:17px;height:17px"><svg width="17" height="17" viewBox="0 0 17 17"><defs><radialGradient id="mg" cx="0.45" cy="0.6" r="0.65"><stop offset="0" stop-color="#ffffff"/><stop offset="0.55" stop-color="#d8f2ff"/><stop offset="1" stop-color="#8ccff0"/></radialGradient></defs><path d="M9.6 10 L14.6 14.6" stroke="#6a6a98" stroke-width="3.4" stroke-linecap="round"/><path d="M10 9.8 L15 14.2" stroke="#f6a42c" stroke-width="2.2" stroke-linecap="round"/><circle cx="6.2" cy="6" r="4.9" fill="url(#mg)" stroke="#72749a" stroke-width="1.2"/><path d="M3.5 5 Q4.5 3 6.5 2.8" stroke="#ffffff" stroke-width="1" fill="none"/></svg></div>
<div style="left:366px;top:131px;width:215px;height:98px;border:1px solid #a4a4a4;border-right-color:#b8b8b8;border-bottom-color:#b8b8b8"></div>
<div style="left:370px;top:125px;width:98px;height:12px;background:#ffffff"></div>
<div class="t" style="left:373.80px;top:123px;font-size:12px;font-weight:bold;color:#111;letter-spacing:-0.207px">Charge Duration</div>
<div class="t" style="left:369.10px;top:141px;font-size:12px;font-weight:normal;color:#1f1f2a;letter-spacing:0.136px">Start Date/Time</div>
<div style="left:458px;top:141px;width:120px;height:24px;background:#EEEEEE;border:1px solid #7A7A7A"></div>
<div class="t" style="left:458.50px;top:144px;font-size:12px;font-weight:normal;color:#222;letter-spacing:0.28px">24-08-2017 00:00</div>
<div class="t" style="left:369.10px;top:170px;font-size:12px;font-weight:normal;color:#1f1f2a;letter-spacing:0.225px">End Date/Time</div>
<div style="left:458px;top:170px;width:120px;height:24px;background:#EEEEEE;border:1px solid #7A7A7A"></div>
<div class="t" style="left:458.50px;top:173px;font-size:12px;font-weight:normal;color:#222;letter-spacing:0.28px">26-08-2017 00:00</div>
<div class="t" style="left:369.10px;top:199px;font-size:12px;font-weight:normal;color:#1f1f2a;letter-spacing:0.229px">Duration</div>
<div style="left:458px;top:199px;width:85px;height:24px;background:#EEEEEE;border:1px solid #7A7A7A"></div>
<div class="t" style="left:459.00px;top:202px;font-size:12px;font-weight:normal;color:#222;letter-spacing:0.6px">2d</div>
<div class="t" style="left:588.20px;top:143px;font-size:12px;font-weight:normal;color:#1f1f2a;letter-spacing:0.056px">Conv. Date</div>
<div style="left:655px;top:141px;width:89px;height:24px;background:#EEEEEE;border:1px solid #7A7A7A"></div>
<div style="left:591px;top:177px;width:9px;height:9px;background:#f8c8a0"></div>
<div style="left:591px;top:177px;width:9px;height:9px;background:linear-gradient(135deg,#ffffff 0%,#f3a060 100%)"></div>
<div style="left:590px;top:176px;width:12px;height:12px;border:1px solid #ffffff"></div>
<div style="left:589px;top:175px;width:12px;height:12px;border:1px solid #6d7c8e"></div>
<svg style="left:589px;top:175px" width="12" height="12" viewBox="0 0 12 12"><rect x="3" y="5" width="2" height="4.8" fill="#151515"/><path d="M4.6 9.2 L10.2 3.2" stroke="#151515" stroke-width="1.7"/></svg>
<div class="t" style="left:605.60px;top:172px;font-size:12px;font-weight:normal;color:#1f1f2a;letter-spacing:0.32px">Show Suggestions</div>
<div style="left:591px;top:201px;width:9px;height:9px;background:#f8c8a0"></div>
<div style="left:591px;top:201px;width:9px;height:9px;background:linear-gradient(135deg,#ffffff 0%,#f3a060 100%)"></div>
<div style="left:590px;top:200px;width:12px;height:12px;border:1px solid #ffffff"></div>
<div style="left:589px;top:199px;width:12px;height:12px;border:1px solid #6d7c8e"></div>
<div class="t" style="left:605.60px;top:196px;font-size:12px;font-weight:normal;color:#1f1f2a;letter-spacing:0.117px">Event Pricing</div>
<div style="left:752px;top:148px;width:289px;height:82px;background:#C9DCF2;border:1px solid #7588a4;border-left-color:#6a8ccc;border-top-color:#6a8ccc"></div>
<div style="left:1041px;top:149px;width:1px;height:82px;background:#b4b4b4"></div>
<div style="left:753px;top:230px;width:289px;height:1px;background:#b4b4b4"></div>
<div style="left:753px;top:149px;width:287px;height:1px;background:#e6f0fb"></div>
<div style="left:754px;top:152px;width:285px;height:75px;background:#fff;border:1px solid #a8a8a8;border-right-color:#ffffff;border-bottom-color:#ffffff"></div>
<div style="left:754px;top:225px;width:284px;height:1px;background:#b0b0b0"></div>
<div style="left:1037px;top:152px;width:1px;height:74px;background:#b0b0b0"></div>
<div style="left:761px;top:154px;width:269px;height:69px;background:#fff;border:2px solid #6f7a86;border-right-width:2px;border-bottom-width:2px"></div>
<div style="left:1010px;top:156px;width:17px;height:17px"><svg width="17" height="17" viewBox="0 0 17 17"><defs><radialGradient id="mg" cx="0.45" cy="0.6" r="0.65"><stop offset="0" stop-color="#ffffff"/><stop offset="0.55" stop-color="#d8f2ff"/><stop offset="1" stop-color="#8ccff0"/></radialGradient></defs><path d="M9.6 10 L14.6 14.6" stroke="#6a6a98" stroke-width="3.4" stroke-linecap="round"/><path d="M10 9.8 L15 14.2" stroke="#f6a42c" stroke-width="2.2" stroke-linecap="round"/><circle cx="6.2" cy="6" r="4.9" fill="url(#mg)" stroke="#72749a" stroke-width="1.2"/><path d="M3.5 5 Q4.5 3 6.5 2.8" stroke="#ffffff" stroke-width="1" fill="none"/></svg></div>
<svg style="left:754px;top:126px" width="90" height="22" viewBox="0 0 90 22" shape-rendering="crispEdges"><polygon points="1,22 1,7 7,1 89,1 89,22" fill="#C64D2D"/><path d="M0.5 22 V6.5 L6.5 0.5 H89.5 V22" fill="none" stroke="#6b8cc8" stroke-width="1" shape-rendering="auto"/><path d="M1.5 22 V7 L7 1.5 H88.5" fill="none" stroke="#ffffff" stroke-opacity="0.35" stroke-width="1" shape-rendering="auto"/></svg>
<svg style="left:843px;top:126px" width="121" height="22" viewBox="0 0 121 22" shape-rendering="crispEdges"><polygon points="1,22 1,7 7,1 120,1 120,22" fill="#FC9A4A"/><path d="M0.5 22 V6.5 L6.5 0.5 H120.5 V22" fill="none" stroke="#6f84a0" stroke-width="1" shape-rendering="auto"/><path d="M1.5 22 V7 L7 1.5 H119.5" fill="none" stroke="#ffffff" stroke-opacity="0.85" stroke-width="1" shape-rendering="auto"/></svg>
<div class="t" style="left:760.40px;top:128px;font-size:12px;font-weight:bold;color:#ffffff;letter-spacing:-0.1px">Comments</div>
<div class="t" style="left:848.90px;top:128px;font-size:12px;font-weight:normal;color:#111;letter-spacing:0.483px">LaborComments</div>
<div class="t" style="left:362.10px;top:239px;font-size:12px;font-weight:normal;color:#1f1f2a;letter-spacing:0.4px">Customer</div>
<div style="left:421px;top:236px;width:160px;height:24px;background:#EEEEEE;border:1px solid #7A7A7A"></div>
<div class="t" style="left:422.70px;top:239px;font-size:12px;font-weight:normal;color:#222;letter-spacing:-0.425px">ADOBE</div>
<div style="left:561px;top:238px;width:17px;height:17px"><svg width="17" height="17" viewBox="0 0 17 17"><defs><radialGradient id="mg" cx="0.45" cy="0.6" r="0.65"><stop offset="0" stop-color="#ffffff"/><stop offset="0.55" stop-color="#d8f2ff"/><stop offset="1" stop-color="#8ccff0"/></radialGradient></defs><path d="M9.6 10 L14.6 14.6" stroke="#6a6a98" stroke-width="3.4" stroke-linecap="round"/><path d="M10 9.8 L15 14.2" stroke="#f6a42c" stroke-width="2.2" stroke-linecap="round"/><circle cx="6.2" cy="6" r="4.9" fill="url(#mg)" stroke="#72749a" stroke-width="1.2"/><path d="M3.5 5 Q4.5 3 6.5 2.8" stroke="#ffffff" stroke-width="1" fill="none"/></svg></div>
<div class="t" style="left:362.10px;top:267px;font-size:12px;font-weight:normal;color:#1f1f2a;letter-spacing:0.183px">Contact</div>
<div style="left:421px;top:265px;width:160px;height:24px;background:#EEEEEE;border:1px solid #7A7A7A"></div>
<div class="t" style="left:422.70px;top:268px;font-size:12px;font-weight:normal;color:#222;letter-spacing:-0.121px">JEFF COATSWORTH</div>
<div style="left:561px;top:267px;width:17px;height:17px"><svg width="17" height="17" viewBox="0 0 17 17"><defs><radialGradient id="mg" cx="0.45" cy="0.6" r="0.65"><stop offset="0" stop-color="#ffffff"/><stop offset="0.55" stop-color="#d8f2ff"/><stop offset="1" stop-color="#8ccff0"/></radialGradient></defs><path d="M9.6 10 L14.6 14.6" stroke="#6a6a98" stroke-width="3.4" stroke-linecap="round"/><path d="M10 9.8 L15 14.2" stroke="#f6a42c" stroke-width="2.2" stroke-linecap="round"/><circle cx="6.2" cy="6" r="4.9" fill="url(#mg)" stroke="#72749a" stroke-width="1.2"/><path d="M3.5 5 Q4.5 3 6.5 2.8" stroke="#ffffff" stroke-width="1" fill="none"/></svg></div>
<div class="t" style="left:362.10px;top:296px;font-size:12px;font-weight:normal;color:#1f1f2a;letter-spacing:0.175px">Contact Tel #</div>
<div style="left:451px;top:294px;width:129px;height:24px;background:#EEEEEE;border:1px solid #7A7A7A"></div>
<div class="t" style="left:586.90px;top:239px;font-size:12px;font-weight:normal;color:#1f1f2a;letter-spacing:0.467px">Bill To</div>
<div style="left:654px;top:236px;width:160px;height:24px;background:#EEEEEE;border:1px solid #7A7A7A"></div>
<div class="t" style="left:655.50px;top:239px;font-size:12px;font-weight:normal;color:#222;letter-spacing:-0.425px">ADOBE</div>
<div style="left:794px;top:238px;width:17px;height:17px"><svg width="17" height="17" viewBox="0 0 17 17"><defs><radialGradient id="mg" cx="0.45" cy="0.6" r="0.65"><stop offset="0" stop-color="#ffffff"/><stop offset="0.55" stop-color="#d8f2ff"/><stop offset="1" stop-color="#8ccff0"/></radialGradient></defs><path d="M9.6 10 L14.6 14.6" stroke="#6a6a98" stroke-width="3.4" stroke-linecap="round"/><path d="M10 9.8 L15 14.2" stroke="#f6a42c" stroke-width="2.2" stroke-linecap="round"/><circle cx="6.2" cy="6" r="4.9" fill="url(#mg)" stroke="#72749a" stroke-width="1.2"/><path d="M3.5 5 Q4.5 3 6.5 2.8" stroke="#ffffff" stroke-width="1" fill="none"/></svg></div>
<div class="t" style="left:586.90px;top:267px;font-size:12px;font-weight:normal;color:#1f1f2a;letter-spacing:0.155px">Bill Contact</div>
<div style="left:654px;top:265px;width:160px;height:24px;background:#EEEEEE;border:1px solid #7A7A7A"></div>
<div class="t" style="left:655.50px;top:268px;font-size:12px;font-weight:normal;color:#222;letter-spacing:-0.121px">JEFF COATSWORTH</div>
<div style="left:794px;top:267px;width:17px;height:17px"><svg width="17" height="17" viewBox="0 0 17 17"><defs><radialGradient id="mg" cx="0.45" cy="0.6" r="0.65"><stop offset="0" stop-color="#ffffff"/><stop offset="0.55" stop-color="#d8f2ff"/><stop offset="1" stop-color="#8ccff0"/></radialGradient></defs><path d="M9.6 10 L14.6 14.6" stroke="#6a6a98" stroke-width="3.4" stroke-linecap="round"/><path d="M10 9.8 L15 14.2" stroke="#f6a42c" stroke-width="2.2" stroke-linecap="round"/><circle cx="6.2" cy="6" r="4.9" fill="url(#mg)" stroke="#72749a" stroke-width="1.2"/><path d="M3.5 5 Q4.5 3 6.5 2.8" stroke="#ffffff" stroke-width="1" fill="none"/></svg></div>
<div class="t" style="left:586.90px;top:296px;font-size:12px;font-weight:normal;color:#1f1f2a;letter-spacing:0.414px">Language</div>
<div style="left:654px;top:294px;width:90px;height:24px;background:#EEEEEE;border:1px solid #7A7A7A"></div>
<div style="left:724px;top:296px;width:17px;height:17px"><svg width="17" height="17" viewBox="0 0 17 17"><defs><radialGradient id="mg" cx="0.45" cy="0.6" r="0.65"><stop offset="0" stop-color="#ffffff"/><stop offset="0.55" stop-color="#d8f2ff"/><stop offset="1" stop-color="#8ccff0"/></radialGradient></defs><path d="M9.6 10 L14.6 14.6" stroke="#6a6a98" stroke-width="3.4" stroke-linecap="round"/><path d="M10 9.8 L15 14.2" stroke="#f6a42c" stroke-width="2.2" stroke-linecap="round"/><circle cx="6.2" cy="6" r="4.9" fill="url(#mg)" stroke="#72749a" stroke-width="1.2"/><path d="M3.5 5 Q4.5 3 6.5 2.8" stroke="#ffffff" stroke-width="1" fill="none"/></svg></div>
<div class="t" style="left:826.30px;top:245px;font-size:12px;font-weight:normal;color:#1f1f2a;letter-spacing:0.24px">Document Folder:</div>
<div style="left:1014px;top:240px;width:29px;height:23px;background:#fff;border:1px solid #b4b4b4"></div>
<div style="left:1016px;top:242px;width:25px;height:1px;background:#8a8a8a"></div>
<div style="left:1016px;top:260px;width:25px;height:1px;background:#8a8a8a"></div>
<div class="t" style="left:1015.20px;top:242px;font-size:11px;font-weight:bold;color:#111;letter-spacing:-0.725px">Reset</div>
<div style="left:826px;top:264px;width:216px;height:49px;background:#fff;border:2px solid #707b88;border-top-width:2px"></div>
<div style="left:8px;top:356px;width:1059px;height:315px;background:#C9DCF2;border:1px solid #7588a4;border-left-color:#6a8ccc;border-top-color:#6a8ccc"></div>
<div style="left:9px;top:357px;width:1057px;height:1px;background:#e6f0fb"></div>
<div style="left:11px;top:360px;width:1052px;height:307px;background:#fff;border:1px solid #a6a6a6;border-right-color:#b4b4b4;border-bottom-color:#b4b4b4"></div>
<div style="left:12px;top:362px;width:1049px;height:303px;background:#fff;border:1px solid #6f8196;border-right-color:#7f8ea0;border-bottom-color:#7f8ea0"></div>
<svg style="left:11px;top:334px" width="66" height="22" viewBox="0 0 66 22" shape-rendering="crispEdges"><polygon points="1,22 1,7 7,1 65,1 65,22" fill="#C64D2D"/><path d="M0.5 22 V6.5 L6.5 0.5 H65.5 V22" fill="none" stroke="#6b8cc8" stroke-width="1" shape-rendering="auto"/><path d="M1.5 22 V7 L7 1.5 H64.5" fill="none" stroke="#ffffff" stroke-opacity="0.35" stroke-width="1" shape-rendering="auto"/></svg>
<svg style="left:76px;top:334px" width="59" height="22" viewBox="0 0 59 22" shape-rendering="crispEdges"><polygon points="1,22 1,7 7,1 58,1 58,22" fill="#FC9A4A"/><path d="M0.5 22 V6.5 L6.5 0.5 H58.5 V22" fill="none" stroke="#6f84a0" stroke-width="1" shape-rendering="auto"/><path d="M1.5 22 V7 L7 1.5 H57.5" fill="none" stroke="#ffffff" stroke-opacity="0.85" stroke-width="1" shape-rendering="auto"/></svg>
<div class="t" style="left:15.20px;top:336px;font-size:12px;font-weight:bold;color:#ffffff;letter-spacing:0.2px">Item(s)</div>
<div class="t" style="left:82.20px;top:336px;font-size:12px;font-weight:normal;color:#111;letter-spacing:0.225px">Labor</div>
<div style="left:13px;top:363px;width:1047px;height:284px;overflow:hidden">
<div style="left:0px;top:0px;width:1100px;height:19px;background:#C64D2D"></div>
<div style="left:0px;top:0px;width:14px;height:1px;background:#8c3a22"></div>
<div style="left:0px;top:18px;width:14px;height:1px;background:#8c3a22"></div>
<div style="left:0px;top:0px;width:1px;height:19px;background:#8c3a22"></div>
<div style="left:13px;top:0px;width:1px;height:19px;background:#8c3a22"></div>
<div style="left:1px;top:1px;width:12px;height:1px;background:#f5743c"></div>
<div style="left:1px;top:17px;width:12px;height:1px;background:#f5743c"></div>
<div style="left:1px;top:1px;width:1px;height:17px;background:#f5743c"></div>
<div style="left:15px;top:0px;width:19px;height:1px;background:#8c3a22"></div>
<div style="left:15px;top:18px;width:19px;height:1px;background:#8c3a22"></div>
<div style="left:15px;top:0px;width:1px;height:19px;background:#8c3a22"></div>
<div style="left:33px;top:0px;width:1px;height:19px;background:#8c3a22"></div>
<div style="left:16px;top:1px;width:17px;height:1px;background:#f5743c"></div>
<div style="left:16px;top:17px;width:17px;height:1px;background:#f5743c"></div>
<div style="left:16px;top:1px;width:1px;height:17px;background:#f5743c"></div>
<div style="left:14px;top:0px;width:1px;height:19px;background:#fb6e34"></div>
<div style="left:35px;top:0px;width:14px;height:1px;background:#8c3a22"></div>
<div style="left:35px;top:18px;width:14px;height:1px;background:#8c3a22"></div>
<div style="left:35px;top:0px;width:1px;height:19px;background:#8c3a22"></div>
<div style="left:48px;top:0px;width:1px;height:19px;background:#8c3a22"></div>
<div style="left:36px;top:1px;width:12px;height:1px;background:#f5743c"></div>
<div style="left:36px;top:17px;width:12px;height:1px;background:#f5743c"></div>
<div style="left:36px;top:1px;width:1px;height:17px;background:#f5743c"></div>
<div style="left:34px;top:0px;width:1px;height:19px;background:#fb6e34"></div>
<div style="left:50px;top:0px;width:14px;height:1px;background:#8c3a22"></div>
<div style="left:50px;top:18px;width:14px;height:1px;background:#8c3a22"></div>
<div style="left:50px;top:0px;width:1px;height:19px;background:#8c3a22"></div>
<div style="left:63px;top:0px;width:1px;height:19px;background:#8c3a22"></div>
<div style="left:51px;top:1px;width:12px;height:1px;background:#f5743c"></div>
<div style="left:51px;top:17px;width:12px;height:1px;background:#f5743c"></div>
<div style="left:51px;top:1px;width:1px;height:17px;background:#f5743c"></div>
<div style="left:49px;top:0px;width:1px;height:19px;background:#fb6e34"></div>
<div style="left:65px;top:0px;width:74px;height:1px;background:#8c3a22"></div>
<div style="left:65px;top:18px;width:74px;height:1px;background:#8c3a22"></div>
<div style="left:65px;top:0px;width:1px;height:19px;background:#8c3a22"></div>
<div style="left:138px;top:0px;width:1px;height:19px;background:#8c3a22"></div>
<div style="left:66px;top:1px;width:72px;height:1px;background:#f5743c"></div>
<div style="left:66px;top:17px;width:72px;height:1px;background:#f5743c"></div>
<div style="left:66px;top:1px;width:1px;height:17px;background:#f5743c"></div>
<div style="left:64px;top:0px;width:1px;height:19px;background:#fb6e34"></div>
<div style="left:140px;top:0px;width:44px;height:1px;background:#8c3a22"></div>
<div style="left:140px;top:18px;width:44px;height:1px;background:#8c3a22"></div>
<div style="left:140px;top:0px;width:1px;height:19px;background:#8c3a22"></div>
<div style="left:183px;top:0px;width:1px;height:19px;background:#8c3a22"></div>
<div style="left:141px;top:1px;width:42px;height:1px;background:#f5743c"></div>
<div style="left:141px;top:17px;width:42px;height:1px;background:#f5743c"></div>
<div style="left:141px;top:1px;width:1px;height:17px;background:#f5743c"></div>
<div style="left:139px;top:0px;width:1px;height:19px;background:#fb6e34"></div>
<div style="left:185px;top:0px;width:99px;height:1px;background:#8c3a22"></div>
<div style="left:185px;top:18px;width:99px;height:1px;background:#8c3a22"></div>
<div style="left:185px;top:0px;width:1px;height:19px;background:#8c3a22"></div>
<div style="left:283px;top:0px;width:1px;height:19px;background:#8c3a22"></div>
<div style="left:186px;top:1px;width:97px;height:1px;background:#f5743c"></div>
<div style="left:186px;top:17px;width:97px;height:1px;background:#f5743c"></div>
<div style="left:186px;top:1px;width:1px;height:17px;background:#f5743c"></div>
<div style="left:184px;top:0px;width:1px;height:19px;background:#fb6e34"></div>
<div style="left:285px;top:0px;width:259px;height:1px;background:#8c3a22"></div>
<div style="left:285px;top:18px;width:259px;height:1px;background:#8c3a22"></div>
<div style="left:285px;top:0px;width:1px;height:19px;background:#8c3a22"></div>
<div style="left:543px;top:0px;width:1px;height:19px;background:#8c3a22"></div>
<div style="left:286px;top:1px;width:257px;height:1px;background:#f5743c"></div>
<div style="left:286px;top:17px;width:257px;height:1px;background:#f5743c"></div>
<div style="left:286px;top:1px;width:1px;height:17px;background:#f5743c"></div>
<div style="left:284px;top:0px;width:1px;height:19px;background:#fb6e34"></div>
<div style="left:545px;top:0px;width:54px;height:1px;background:#8c3a22"></div>
<div style="left:545px;top:18px;width:54px;height:1px;background:#8c3a22"></div>
<div style="left:545px;top:0px;width:1px;height:19px;background:#8c3a22"></div>
<div style="left:598px;top:0px;width:1px;height:19px;background:#8c3a22"></div>
<div style="left:546px;top:1px;width:52px;height:1px;background:#f5743c"></div>
<div style="left:546px;top:17px;width:52px;height:1px;background:#f5743c"></div>
<div style="left:546px;top:1px;width:1px;height:17px;background:#f5743c"></div>
<div style="left:544px;top:0px;width:1px;height:19px;background:#fb6e34"></div>
<div style="left:600px;top:0px;width:29px;height:1px;background:#8c3a22"></div>
<div style="left:600px;top:18px;width:29px;height:1px;background:#8c3a22"></div>
<div style="left:600px;top:0px;width:1px;height:19px;background:#8c3a22"></div>
<div style="left:628px;top:0px;width:1px;height:19px;background:#8c3a22"></div>
<div style="left:601px;top:1px;width:27px;height:1px;background:#f5743c"></div>
<div style="left:601px;top:17px;width:27px;height:1px;background:#f5743c"></div>
<div style="left:601px;top:1px;width:1px;height:17px;background:#f5743c"></div>
<div style="left:599px;top:0px;width:1px;height:19px;background:#fb6e34"></div>
<div style="left:630px;top:0px;width:59px;height:1px;background:#8c3a22"></div>
<div style="left:630px;top:18px;width:59px;height:1px;background:#8c3a22"></div>
<div style="left:630px;top:0px;width:1px;height:19px;background:#8c3a22"></div>
<div style="left:688px;top:0px;width:1px;height:19px;background:#8c3a22"></div>
<div style="left:631px;top:1px;width:57px;height:1px;background:#f5743c"></div>
<div style="left:631px;top:17px;width:57px;height:1px;background:#f5743c"></div>
<div style="left:631px;top:1px;width:1px;height:17px;background:#f5743c"></div>
<div style="left:629px;top:0px;width:1px;height:19px;background:#fb6e34"></div>
<div style="left:690px;top:0px;width:54px;height:1px;background:#8c3a22"></div>
<div style="left:690px;top:18px;width:54px;height:1px;background:#8c3a22"></div>
<div style="left:690px;top:0px;width:1px;height:19px;background:#8c3a22"></div>
<div style="left:743px;top:0px;width:1px;height:19px;background:#8c3a22"></div>
<div style="left:691px;top:1px;width:52px;height:1px;background:#f5743c"></div>
<div style="left:691px;top:17px;width:52px;height:1px;background:#f5743c"></div>
<div style="left:691px;top:1px;width:1px;height:17px;background:#f5743c"></div>
<div style="left:689px;top:0px;width:1px;height:19px;background:#fb6e34"></div>
<div style="left:745px;top:0px;width:59px;height:1px;background:#8c3a22"></div>
<div style="left:745px;top:18px;width:59px;height:1px;background:#8c3a22"></div>
<div style="left:745px;top:0px;width:1px;height:19px;background:#8c3a22"></div>
<div style="left:803px;top:0px;width:1px;height:19px;background:#8c3a22"></div>
<div style="left:746px;top:1px;width:57px;height:1px;background:#f5743c"></div>
<div style="left:746px;top:17px;width:57px;height:1px;background:#f5743c"></div>
<div style="left:746px;top:1px;width:1px;height:17px;background:#f5743c"></div>
<div style="left:744px;top:0px;width:1px;height:19px;background:#fb6e34"></div>
<div style="left:805px;top:0px;width:59px;height:1px;background:#8c3a22"></div>
<div style="left:805px;top:18px;width:59px;height:1px;background:#8c3a22"></div>
<div style="left:805px;top:0px;width:1px;height:19px;background:#8c3a22"></div>
<div style="left:863px;top:0px;width:1px;height:19px;background:#8c3a22"></div>
<div style="left:806px;top:1px;width:57px;height:1px;background:#f5743c"></div>
<div style="left:806px;top:17px;width:57px;height:1px;background:#f5743c"></div>
<div style="left:806px;top:1px;width:1px;height:17px;background:#f5743c"></div>
<div style="left:804px;top:0px;width:1px;height:19px;background:#fb6e34"></div>
<div style="left:865px;top:0px;width:74px;height:1px;background:#8c3a22"></div>
<div style="left:865px;top:18px;width:74px;height:1px;background:#8c3a22"></div>
<div style="left:865px;top:0px;width:1px;height:19px;background:#8c3a22"></div>
<div style="left:938px;top:0px;width:1px;height:19px;background:#8c3a22"></div>
<div style="left:866px;top:1px;width:72px;height:1px;background:#f5743c"></div>
<div style="left:866px;top:17px;width:72px;height:1px;background:#f5743c"></div>
<div style="left:866px;top:1px;width:1px;height:17px;background:#f5743c"></div>
<div style="left:864px;top:0px;width:1px;height:19px;background:#fb6e34"></div>
<div style="left:940px;top:0px;width:39px;height:1px;background:#8c3a22"></div>
<div style="left:940px;top:18px;width:39px;height:1px;background:#8c3a22"></div>
<div style="left:940px;top:0px;width:1px;height:19px;background:#8c3a22"></div>
<div style="left:978px;top:0px;width:1px;height:19px;background:#8c3a22"></div>
<div style="left:941px;top:1px;width:37px;height:1px;background:#f5743c"></div>
<div style="left:941px;top:17px;width:37px;height:1px;background:#f5743c"></div>
<div style="left:941px;top:1px;width:1px;height:17px;background:#f5743c"></div>
<div style="left:939px;top:0px;width:1px;height:19px;background:#fb6e34"></div>
<div style="left:980px;top:0px;width:29px;height:1px;background:#8c3a22"></div>
<div style="left:980px;top:18px;width:29px;height:1px;background:#8c3a22"></div>
<div style="left:980px;top:0px;width:1px;height:19px;background:#8c3a22"></div>
<div style="left:1008px;top:0px;width:1px;height:19px;background:#8c3a22"></div>
<div style="left:981px;top:1px;width:27px;height:1px;background:#f5743c"></div>
<div style="left:981px;top:17px;width:27px;height:1px;background:#f5743c"></div>
<div style="left:981px;top:1px;width:1px;height:17px;background:#f5743c"></div>
<div style="left:979px;top:0px;width:1px;height:19px;background:#fb6e34"></div>
<div style="left:1010px;top:0px;width:77px;height:1px;background:#8c3a22"></div>
<div style="left:1010px;top:18px;width:77px;height:1px;background:#8c3a22"></div>
<div style="left:1010px;top:0px;width:1px;height:19px;background:#8c3a22"></div>
<div style="left:1086px;top:0px;width:1px;height:19px;background:#8c3a22"></div>
<div style="left:1011px;top:1px;width:75px;height:1px;background:#f5743c"></div>
<div style="left:1011px;top:17px;width:75px;height:1px;background:#f5743c"></div>
<div style="left:1011px;top:1px;width:1px;height:17px;background:#f5743c"></div>
<div style="left:1009px;top:0px;width:1px;height:19px;background:#fb6e34"></div>
<div style="left:0px;top:19px;width:1100px;height:19px;background:#FC9A4A"></div>
<div style="left:0px;top:19px;width:1100px;height:1px;background:#fb6e34"></div>
<div style="left:0px;top:38px;width:1100px;height:1px;background:#b87038"></div>
<div style="left:0px;top:39px;width:1100px;height:18px;background:#ffffff"></div>
<div style="left:0px;top:57px;width:1100px;height:1px;background:#b87038"></div>
<div style="left:14px;top:20px;width:1px;height:38px;background:#b87038"></div>
<div style="left:34px;top:20px;width:1px;height:38px;background:#b87038"></div>
<div style="left:49px;top:20px;width:1px;height:38px;background:#b87038"></div>
<div style="left:64px;top:20px;width:1px;height:38px;background:#b87038"></div>
<div style="left:139px;top:20px;width:1px;height:38px;background:#b87038"></div>
<div style="left:184px;top:20px;width:1px;height:38px;background:#b87038"></div>
<div style="left:284px;top:20px;width:1px;height:38px;background:#b87038"></div>
<div style="left:544px;top:20px;width:1px;height:38px;background:#b87038"></div>
<div style="left:599px;top:20px;width:1px;height:38px;background:#b87038"></div>
<div style="left:629px;top:20px;width:1px;height:38px;background:#b87038"></div>
<div style="left:689px;top:20px;width:1px;height:38px;background:#b87038"></div>
<div style="left:744px;top:20px;width:1px;height:38px;background:#b87038"></div>
<div style="left:804px;top:20px;width:1px;height:38px;background:#b87038"></div>
<div style="left:864px;top:20px;width:1px;height:38px;background:#b87038"></div>
<div style="left:939px;top:20px;width:1px;height:38px;background:#b87038"></div>
<div style="left:979px;top:20px;width:1px;height:38px;background:#b87038"></div>
<div style="left:1009px;top:20px;width:1px;height:38px;background:#b87038"></div>
</div>
<div class="t" style="left:15.70px;top:364px;font-size:12px;font-weight:normal;color:#ffffff;letter-spacing:0.6px">C</div>
<div class="t" style="left:34.80px;top:364px;font-size:12px;font-weight:normal;color:#ffffff;letter-spacing:0.6px">L</div>
<div class="t" style="left:52.20px;top:364px;font-size:12px;font-weight:normal;color:#ffffff;letter-spacing:0.4px">T</div>
<div class="t" style="left:65.70px;top:364px;font-size:12px;font-weight:normal;color:#ffffff;letter-spacing:0.4px">S</div>
<div class="t" style="left:97.50px;top:364px;font-size:12px;font-weight:normal;color:#ffffff;letter-spacing:0.26px">Status</div>
<div class="t" style="left:159.60px;top:364px;font-size:12px;font-weight:normal;color:#ffffff;letter-spacing:-0.2px">Action</div>
<div class="t" style="left:219.70px;top:364px;font-size:12px;font-weight:normal;color:#ffffff;letter-spacing:0.089px">Product ID</div>
<div class="t" style="left:396.90px;top:364px;font-size:12px;font-weight:normal;color:#ffffff;letter-spacing:0.38px">Description</div>
<div class="t" style="left:561.80px;top:364px;font-size:12px;font-weight:normal;color:#ffffff;letter-spacing:0.243px">Duration</div>
<div class="t" style="left:619.60px;top:364px;font-size:12px;font-weight:normal;color:#ffffff;letter-spacing:-0.8px">Qty</div>
<div class="t" style="left:646.80px;top:364px;font-size:12px;font-weight:normal;color:#ffffff;letter-spacing:0.078px">Unit Price</div>
<div class="t" style="left:705.90px;top:364px;font-size:12px;font-weight:normal;color:#ffffff;letter-spacing:0.343px">Discount</div>
<div class="t" style="left:765.10px;top:364px;font-size:12px;font-weight:normal;color:#ffffff;letter-spacing:0.314px">Net Disc</div>
<div class="t" style="left:822.40px;top:364px;font-size:12px;font-weight:normal;color:#ffffff;letter-spacing:0.157px">Net Each</div>
<div class="t" style="left:894.70px;top:364px;font-size:12px;font-weight:normal;color:#ffffff;letter-spacing:0.12px">Amount</div>
<div class="t" style="left:961.70px;top:364px;font-size:12px;font-weight:normal;color:#ffffff;letter-spacing:0.467px">Unit</div>
<div class="t" style="left:996.70px;top:364px;font-size:12px;font-weight:normal;color:#ffffff;letter-spacing:0.0px">DIW</div>
<div class="t" style="left:1037.80px;top:364px;font-size:12px;font-weight:normal;color:#ffffff;letter-spacing:0.05px">DIM</div>
<div style="left:16px;top:388px;width:9px;height:9px;background:#f8c8a0"></div>
<div style="left:16px;top:388px;width:9px;height:9px;background:linear-gradient(135deg,#fbd8bc 0%,#f08838 100%)"></div>
<div style="left:15px;top:387px;width:12px;height:12px;border:1px solid #ffffff"></div>
<div style="left:14px;top:386px;width:12px;height:12px;border:1px solid #6d7c8e"></div>
<div style="left:33px;top:388px;width:9px;height:9px;background:#f8c8a0"></div>
<div style="left:33px;top:388px;width:9px;height:9px;background:linear-gradient(135deg,#fbd8bc 0%,#f08838 100%)"></div>
<div style="left:32px;top:387px;width:12px;height:12px;border:1px solid #ffffff"></div>
<div style="left:31px;top:386px;width:12px;height:12px;border:1px solid #6d7c8e"></div>
<div style="left:51px;top:388px;width:9px;height:9px;background:#f8c8a0"></div>
<div style="left:51px;top:388px;width:9px;height:9px;background:linear-gradient(135deg,#fbd8bc 0%,#f08838 100%)"></div>
<div style="left:50px;top:387px;width:12px;height:12px;border:1px solid #ffffff"></div>
<div style="left:49px;top:386px;width:12px;height:12px;border:1px solid #6d7c8e"></div>
<svg style="left:49px;top:386px" width="12" height="12" viewBox="0 0 12 12"><rect x="3" y="5" width="2" height="4.8" fill="#151515"/><path d="M4.6 9.2 L10.2 3.2" stroke="#151515" stroke-width="1.7"/></svg>
<div style="left:66px;top:388px;width:9px;height:9px;background:#f8c8a0"></div>
<div style="left:66px;top:388px;width:9px;height:9px;background:linear-gradient(135deg,#fbd8bc 0%,#f08838 100%)"></div>
<div style="left:65px;top:387px;width:12px;height:12px;border:1px solid #ffffff"></div>
<div style="left:64px;top:386px;width:12px;height:12px;border:1px solid #6d7c8e"></div>
<div class="t" style="left:78.90px;top:383px;font-size:12px;font-weight:normal;color:#111;letter-spacing:0.3px">Reserved</div>
<div class="t" style="left:154.20px;top:383px;font-size:12px;font-weight:normal;color:#111;letter-spacing:0.433px">Rent</div>
<div class="t" style="left:199.30px;top:383px;font-size:12px;font-weight:normal;color:#111;letter-spacing:-0.27px">DREAMWEAVER</div>
<div class="t" style="left:305.90px;top:383px;font-size:12px;font-weight:normal;color:#111;letter-spacing:0.081px">Adobe Dreamweaver</div>
<div class="t" style="left:558.90px;top:383px;font-size:12px;font-weight:normal;color:#111;letter-spacing:0.6px">2d</div>
<div class="t" style="left:634.00px;top:383px;font-size:12px;font-weight:normal;color:#111;letter-spacing:0.4px">1</div>
<div class="t" style="left:678.20px;top:383px;font-size:12px;font-weight:normal;color:#111;letter-spacing:-0.233px">0.00</div>
<div class="t" style="left:733.30px;top:383px;font-size:12px;font-weight:normal;color:#111;letter-spacing:-0.233px">0.00</div>
<div class="t" style="left:793.40px;top:383px;font-size:12px;font-weight:normal;color:#111;letter-spacing:-0.233px">0.00</div>
<div class="t" style="left:853.20px;top:383px;font-size:12px;font-weight:normal;color:#111;letter-spacing:-0.233px">0.00</div>
<div class="t" style="left:928.30px;top:383px;font-size:12px;font-weight:normal;color:#111;letter-spacing:-0.233px">0.00</div>
<div class="t" style="left:954.30px;top:383px;font-size:12px;font-weight:normal;color:#111;letter-spacing:-0.1px">Day</div>
<div class="t" style="left:997.00px;top:383px;font-size:12px;font-weight:normal;color:#111;letter-spacing:0.2px">7.00</div>
<div style="left:16px;top:407px;width:9px;height:9px;background:#f8c8a0"></div>
<div style="left:16px;top:407px;width:9px;height:9px;background:linear-gradient(135deg,#ffffff 0%,#f29a58 100%)"></div>
<div style="left:15px;top:406px;width:12px;height:12px;border:1px solid #ffffff"></div>
<div style="left:14px;top:405px;width:12px;height:12px;border:1px solid #6d7c8e"></div>
<div style="left:33px;top:407px;width:9px;height:9px;background:#f8c8a0"></div>
<div style="left:33px;top:407px;width:9px;height:9px;background:linear-gradient(135deg,#ffffff 0%,#f29a58 100%)"></div>
<div style="left:32px;top:406px;width:12px;height:12px;border:1px solid #ffffff"></div>
<div style="left:31px;top:405px;width:12px;height:12px;border:1px solid #6d7c8e"></div>
<div style="left:51px;top:407px;width:9px;height:9px;background:#f8c8a0"></div>
<div style="left:51px;top:407px;width:9px;height:9px;background:linear-gradient(135deg,#ffffff 0%,#f29a58 100%)"></div>
<div style="left:50px;top:406px;width:12px;height:12px;border:1px solid #ffffff"></div>
<div style="left:49px;top:405px;width:12px;height:12px;border:1px solid #6d7c8e"></div>
<svg style="left:49px;top:405px" width="12" height="12" viewBox="0 0 12 12"><rect x="3" y="5" width="2" height="4.8" fill="#151515"/><path d="M4.6 9.2 L10.2 3.2" stroke="#151515" stroke-width="1.7"/></svg>
<div style="left:66px;top:407px;width:9px;height:9px;background:#f8c8a0"></div>
<div style="left:66px;top:407px;width:9px;height:9px;background:linear-gradient(135deg,#ffffff 0%,#f29a58 100%)"></div>
<div style="left:65px;top:406px;width:12px;height:12px;border:1px solid #ffffff"></div>
<div style="left:64px;top:405px;width:12px;height:12px;border:1px solid #6d7c8e"></div>
<div class="t" style="left:78.90px;top:402px;font-size:12px;font-weight:normal;color:#111;letter-spacing:0.3px">Reserved</div>
<div class="t" style="left:154.20px;top:402px;font-size:12px;font-weight:normal;color:#111;letter-spacing:0.433px">Rent</div>
<div class="t" style="left:199.30px;top:402px;font-size:12px;font-weight:normal;color:#111;letter-spacing:-0.038px">PHOTOSHOP</div>
<div class="t" style="left:305.90px;top:402px;font-size:12px;font-weight:normal;color:#111;letter-spacing:0.129px">Adobe Photoshop</div>
<div class="t" style="left:558.90px;top:402px;font-size:12px;font-weight:normal;color:#111;letter-spacing:0.6px">2d</div>
<div class="t" style="left:634.00px;top:402px;font-size:12px;font-weight:normal;color:#111;letter-spacing:0.4px">1</div>
<div class="t" style="left:678.20px;top:402px;font-size:12px;font-weight:normal;color:#111;letter-spacing:-0.233px">0.00</div>
<div class="t" style="left:733.30px;top:402px;font-size:12px;font-weight:normal;color:#111;letter-spacing:-0.233px">0.00</div>
<div class="t" style="left:793.40px;top:402px;font-size:12px;font-weight:normal;color:#111;letter-spacing:-0.233px">0.00</div>
<div class="t" style="left:853.20px;top:402px;font-size:12px;font-weight:normal;color:#111;letter-spacing:-0.233px">0.00</div>
<div class="t" style="left:928.30px;top:402px;font-size:12px;font-weight:normal;color:#111;letter-spacing:-0.233px">0.00</div>
<div class="t" style="left:954.30px;top:402px;font-size:12px;font-weight:normal;color:#111;letter-spacing:-0.1px">Day</div>
<div class="t" style="left:997.00px;top:402px;font-size:12px;font-weight:normal;color:#111;letter-spacing:0.2px">7.00</div>
<div style="left:1022px;top:380px;width:38px;height:45px;overflow:hidden">
<div class="t" style="left:17.20px;top:3px;font-size:12px;color:#111;letter-spacing:0.2px">28.00</div>
<div class="t" style="left:17.20px;top:22px;font-size:12px;color:#111;letter-spacing:0.2px">28.00</div>
</div>
<div style="left:13px;top:647px;width:1047px;height:16px;background:#EEEEEE"></div>
<div style="left:13px;top:647px;width:1047px;height:1px;background:#7a8ea8"></div>
<div style="left:13px;top:648px;width:1047px;height:1px;background:#ffffff"></div>
<div style="left:13px;top:662px;width:1047px;height:1px;background:#7a8ea8"></div>
<div style="left:13px;top:647px;width:1px;height:16px;background:#7a8ea8"></div>
<div style="left:14px;top:648px;width:1px;height:14px;background:#ffffff"></div>
<svg style="left:18px;top:651px" width="6" height="10" viewBox="0 0 6 10"><path d="M5 0.5 V9.5 L0.5 5 Z" fill="#222"/></svg>
<div style="left:28px;top:647px;width:479px;height:16px;background:linear-gradient(#f3c6a6,#eeb28a 45%,#e69a68);border:1px solid #f2b400"></div>
<div style="left:29px;top:648px;width:477px;height:1px;background:#e89a70"></div>
<svg style="left:264px;top:650px" width="8" height="11" viewBox="0 0 8 11"><path d="M1.5 0 V11 M4 0 V11 M6.5 0 V11" stroke="#6e6e96" stroke-width="1"/><path d="M2.5 1 V11 M5 1 V11 M7.5 1 V11" stroke="#ffffff" stroke-width="0.8" opacity="0.7"/></svg>
<div style="left:1043px;top:648px;width:1px;height:15px;background:#7a8ea8"></div>
<div style="left:1044px;top:648px;width:1px;height:14px;background:#ffffff"></div>
<div style="left:1059px;top:647px;width:1px;height:16px;background:#7a8ea8"></div>
<svg style="left:1050px;top:651px" width="6" height="10" viewBox="0 0 6 10"><path d="M1 0.5 V9.5 L5.5 5 Z" fill="#222"/></svg>
<div class="t" style="left:69.90px;top:676px;font-size:14px;font-weight:bold;color:#1a1a1a;letter-spacing:0.45px">Items</div>
<div style="left:120px;top:673px;width:100px;height:24px;background:#EEEEEE;border:1px solid #7A7A7A"></div>
<div class="t" style="left:234.90px;top:676px;font-size:14px;font-weight:bold;color:#1a1a1a;letter-spacing:0.375px">Labor</div>
<div style="left:287px;top:673px;width:100px;height:24px;background:#EEEEEE;border:1px solid #7A7A7A"></div>
<div class="t" style="left:445.70px;top:676px;font-size:14px;font-weight:bold;color:#1a1a1a;letter-spacing:0.25px">Sub Total</div>
<div style="left:525px;top:673px;width:100px;height:24px;background:#EEEEEE;border:1px solid #7A7A7A"></div>
<div class="t" style="left:636.40px;top:676px;font-size:14px;font-weight:bold;color:#1a1a1a;letter-spacing:-0.2px">Tax</div>
<div style="left:670px;top:673px;width:100px;height:24px;background:#EEEEEE;border:1px solid #7A7A7A"></div>
<div style="left:813px;top:673px;width:89px;height:23px;background:#fff;border:1px solid #b8b8b8"></div>
<div class="t" style="left:842.90px;top:676px;font-size:14px;font-weight:bold;color:#111;letter-spacing:-0.025px">Total</div>
<div style="left:906px;top:673px;width:100px;height:24px;background:#EEEEEE;border:1px solid #7A7A7A"></div>
<div class="t" style="left:906.90px;top:675px;font-size:14px;font-weight:bold;color:#111;letter-spacing:0.2px">0.00</div>
<div style="left:9px;top:708px;width:1057px;height:23px;background:#fff;border:1px solid #7e7e7e;border-right-color:#bdbdbd;border-bottom-color:#bdbdbd"></div>
</body></html>
